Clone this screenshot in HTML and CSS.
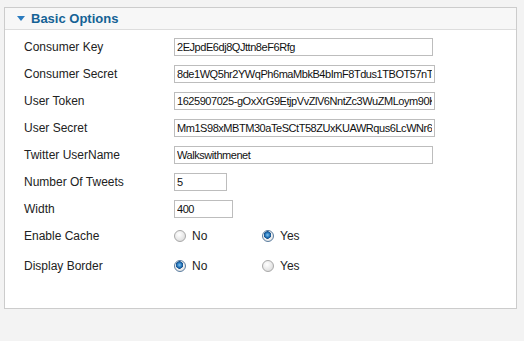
FILE: index.html
```html
<!DOCTYPE html>
<html lang="en">
<head>
    <meta charset="UTF-8">
    <title>Basic Options</title>
    <link rel="stylesheet" href="styles.css">
</head>
<body>
    <div class="panel">
        <!-- Panel header -->
        <h3 class="panel-title"><span class="arrow"></span>Basic Options</h3>

        <!-- Options list -->
        <div class="options">
            <div class="row">
                <label>Consumer Key</label>
                <input type="text" class="wide short" value="2EJpdE6dj8QJttn8eF6Rfg">
            </div>
            <div class="row">
                <label>Consumer Secret</label>
                <input type="text" class="wide" value="8de1WQ5hr2YWqPh6maMbkB4bImF8Tdus1TBOT57nTsQjLz">
            </div>
            <div class="row">
                <label>User Token</label>
                <input type="text" class="wide" value="1625907025-gOxXrG9EtjpVvZlV6NntZc3WuZMLoym90Kq">
            </div>
            <div class="row">
                <label>User Secret</label>
                <input type="text" class="wide" value="Mm1S98xMBTM30aTeSCtT58ZUxKUAWRqus6LcWNr6lPq">
            </div>
            <div class="row">
                <label>Twitter UserName</label>
                <input type="text" class="wide short" value="Walkswithmenet">
            </div>
            <div class="row">
                <label>Number Of Tweets</label>
                <input type="text" class="tiny" value="5">
            </div>
            <div class="row">
                <label>Width</label>
                <input type="text" class="small" value="400">
            </div>
            <div class="row">
                <label>Enable Cache</label>
                <div class="radios">
                    <span class="option"><input type="radio" name="cache"> No</span>
                    <span class="option"><input type="radio" name="cache" checked> Yes</span>
                </div>
            </div>
            <div class="row spaced">
                <label>Display Border</label>
                <div class="radios">
                    <span class="option"><input type="radio" name="border" checked> No</span>
                    <span class="option"><input type="radio" name="border"> Yes</span>
                </div>
            </div>
        </div>
    </div>
</body>
</html>
```

FILE: styles.css
```css
/* General Styles */
body {
    font-family: Arial, "Liberation Sans", sans-serif;
    background-color: #f3f3f3;
    color: #222;
    margin: 0;
    padding: 7px 7px 0 4px;
}

.panel {
    background: #fff;
    border: 1px solid #cccccc;
    height: 302px;
    box-sizing: border-box;
}

.panel-title {
    margin: 0;
    height: 21px;
    line-height: 21px;
    padding-left: 12px;
    background: #f7f7f7;
    border-bottom: 1px solid #dddddd;
    color: #146295;
    font-size: 13px;
    font-weight: bold;
}

.arrow {
    display: inline-block;
    width: 0;
    height: 0;
    border-left: 4px solid transparent;
    border-right: 4px solid transparent;
    border-top: 5px solid #2a7bbf;
    margin-right: 6px;
    vertical-align: 2px;
}

.options {
    padding: 3px 0 0 19px;
}

.row {
    display: flex;
    align-items: center;
    height: 27px;
}

.row.spaced {
    margin-top: 3px;
}

.row label {
    width: 150px;
    font-size: 12px;
}

input[type="text"] {
    box-sizing: border-box;
    height: 18px;
    border: 1px solid #bdbdbd;
    padding: 0 2px;
    font-family: Arial, "Liberation Sans", sans-serif;
    font-size: 11px;
    letter-spacing: -0.45px;
    color: #111;
    margin: 0;
}

input.wide { width: 261px; }
input.wide.short { width: 259px; }
input.tiny { width: 53px; }
input.small { width: 59px; }

.radios {
    display: flex;
    font-size: 12px;
}

.option {
    display: flex;
    align-items: center;
    width: 88px;
}

input[type="radio"] {
    appearance: none;
    -webkit-appearance: none;
    width: 12px;
    height: 12px;
    margin: 0 6px 0 0;
    border: 1px solid #a8a8a8;
    border-radius: 50%;
    background: radial-gradient(circle at 40% 35%, #ffffff 0, #e6e6e6 60%, #d0d0d0 100%);
    box-sizing: border-box;
}

input[type="radio"]:checked {
    border-color: #5a7da0;
    background: radial-gradient(circle at 45% 40%, #7fc4f0 0, #1f6fb5 2.5px, #1a4f86 3.5px, #f2f2f2 4px, #d4d4d4 100%);
}
```
